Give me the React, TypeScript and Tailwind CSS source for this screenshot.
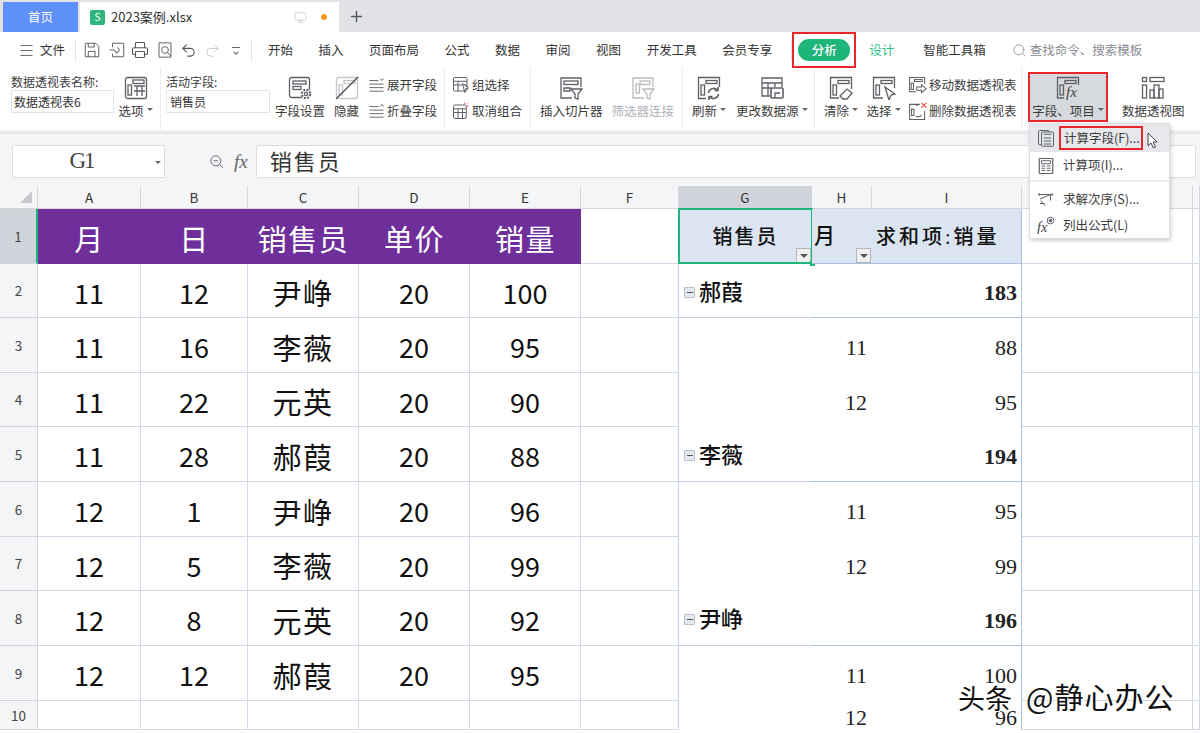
import type { ReactNode } from "react";
import { Menu, Monitor, Plus, Printer, Redo2, Search, Undo2 } from "lucide-react";

const sans = "font-['Noto_Sans_CJK_SC','Noto_Sans',sans-serif]";
const serif = "font-['Liberation_Serif','Noto_Sans_CJK_SC',serif]";

const sales: (string | number)[][] = [
  [11, 12, "尹峥", 20, 100],
  [11, 16, "李薇", 20, 95],
  [11, 22, "元英", 20, 90],
  [11, 28, "郝葭", 20, 88],
  [12, 1, "尹峥", 20, 96],
  [12, 5, "李薇", 20, 99],
  [12, 8, "元英", 20, 92],
  [12, 12, "郝葭", 20, 95],
  ["", "", "", "", ""],
];

// 透视表的行，和左边的数据行一一对应
const pivot = [
  { name: "郝葭", total: "183", line: true },
  { month: "11", total: "88" },
  { month: "12", total: "95" },
  { name: "李薇", total: "194", line: true },
  { month: "11", total: "95" },
  { month: "12", total: "99" },
  { name: "尹峥", total: "196", line: true },
  { month: "11", total: "100" },
  { month: "12", total: "96" },
];

function Ic({ children, size = 24, dim }: { children: ReactNode; size?: number; dim?: boolean }) {
  return (
    <svg
      width={size}
      height={size}
      viewBox="0 0 24 24"
      fill="none"
      stroke={dim ? "#b9bcc1" : "#5c6066"}
      strokeWidth={1.3}
      className="shrink-0"
    >
      {children}
    </svg>
  );
}

const Frame = () => (
  <>
    <rect x="1.5" y="1.5" width="21" height="21" rx="2" />
    <rect x="9" y="4.5" width="11" height="3" />
    <rect x="4" y="9" width="3.5" height="10" />
  </>
);

function Caret() {
  return <span className="ml-[3px] inline-block h-0 w-0 translate-y-[-2px] border-x-[3px] border-t-[3px] border-x-transparent border-t-[#666]" />;
}

function Big({
  icon,
  label,
  caret,
  dim,
  className = "",
}: {
  icon: ReactNode;
  label: string;
  caret?: boolean;
  dim?: boolean;
  className?: string;
}) {
  return (
    <div className={`flex flex-none flex-col items-center pt-[8px] ${className}`}>
      <div className="flex h-[24px] items-center justify-center">{icon}</div>
      <div className={`mt-[3px] flex h-[16px] items-center whitespace-nowrap text-[12.5px] leading-[16px] ${dim ? "text-[#aeb1b6]" : "text-[#3c3c3c]"}`}>
        {label}
        {caret && <Caret />}
      </div>
    </div>
  );
}

function Small({ icon, label }: { icon: ReactNode; label: string }) {
  return (
    <div className="flex h-[26px] items-center gap-[2px] whitespace-nowrap text-[12.5px] text-[#3c3c3c]">
      {icon}
      {label}
    </div>
  );
}

function SmallCol({ children, className = "" }: { children: ReactNode; className?: string }) {
  return <div className={`flex flex-none flex-col pt-[4px] ${className}`}>{children}</div>;
}

function Group({ children, className = "" }: { children: ReactNode; className?: string }) {
  return <div className={`flex h-[62px] flex-none border-r border-[#ececee] ${className}`}>{children}</div>;
}

function TitleBar() {
  return (
    <div className="flex h-[32px] flex-none items-end bg-[#e1e2e6] pl-[3px]">
      <div className="flex h-[30px] w-[75px] items-center justify-center bg-[#5f8ff8] text-[12.5px] text-white">首页</div>
      <div className="ml-[2px] flex h-[30px] w-[259px] items-center bg-white pl-[10px] text-[13px] text-[#333]">
        <span className="flex h-[15px] w-[15px] items-center justify-center rounded-[2px] bg-[#2eb67d] text-[10px] leading-none text-white">S</span>
        <span className="ml-[6px]">2023案例.xlsx</span>
        <Monitor size={13} strokeWidth={1.3} className="ml-[102px] text-[#c3c6cc]" />
        <span className="ml-[14px] h-[6px] w-[6px] rounded-full bg-[#f29a1f]" />
      </div>
      <Plus size={17} strokeWidth={2} className="mb-[7px] ml-[9px] text-[#555a66]" />
    </div>
  );
}

function MenuBar() {
  const tabs = ["开始", "插入", "页面布局", "公式", "数据", "审阅", "视图", "开发工具", "会员专享"];
  return (
    <div className="flex h-[36px] flex-none items-center bg-white text-[12.5px] text-[#333]">
      <Menu size={17} strokeWidth={1.2} className="ml-[18px] text-[#555]" />
      <span className="ml-[5px]">文件</span>
      <span className="ml-[10px] h-[22px] w-px bg-[#e4e5e8]" />
      <div className="ml-[7px] flex w-[168px] flex-none items-center text-[#55595f]">
        <Ic size={18}>
          <path d="M3 3h14l4 4v14H3z" />
          <path d="M7 21v-7h9v7M7 3v5h8V3" />
        </Ic>
        <span className="ml-[7px]">
          <Ic size={18}>
            <path d="M6 3h15v18H6v-4M6 8V3" />
            <path d="M2 12h7a3 3 0 1 0 3-3" />
            <path d="M10 14l2 3" />
          </Ic>
        </span>
        <Printer size={18} strokeWidth={1.5} className="ml-[5px]" />
        <span className="ml-[7px]">
          <Ic size={18}>
            <path d="M4 2.5h16v19H4z" />
            <circle cx="12" cy="12" r="4.5" />
            <path d="M15 15l5 5" />
          </Ic>
        </span>
        <Undo2 size={17} strokeWidth={1.6} className="ml-[6px]" />
        <Redo2 size={17} strokeWidth={1.4} className="ml-[7px] text-[#c6c8cc]" />
        <span className="ml-[11px] flex flex-col items-center gap-[2px]">
          <span className="h-px w-[8px] bg-[#666]" />
          <span className="h-[4px] w-[4px] rotate-45 border-b border-r border-[#666]" />
        </span>
      </div>
      <span className="h-[22px] w-px bg-[#e4e5e8]" />
      <div className="ml-[16px] flex gap-[25.5px] whitespace-nowrap">
        {tabs.map((t) => (
          <span key={t}>{t}</span>
        ))}
      </div>
      <span className="ml-[19px] h-[22px] w-px bg-[#e4e5e8]" />
      <div className="flex h-[36px] w-[64px] flex-none items-center justify-center border-[2.5px] border-[#e8262b]">
        <span className="flex h-[22px] w-[52px] items-center justify-center rounded-full bg-[#1db57a] font-medium text-white">分析</span>
      </div>
      <span className="ml-[13px] text-[#2fbf85]">设计</span>
      <span className="ml-[29px]">智能工具箱</span>
      <Search size={15} strokeWidth={1.3} className="ml-[26px] text-[#8a8d93]" />
      <span className="ml-[3px] text-[#8a8d93]">查找命令、搜索模板</span>
    </div>
  );
}

function Ribbon() {
  return (
    <div className="flex h-[62px] flex-none bg-white">
      <Group className="w-[161px] pl-[11px]">
        <div className="w-[103px] flex-none">
          <div className="mt-[6px] h-[16px] whitespace-nowrap text-[12px] leading-[16px] text-[#3c3c3c]">数据透视表名称:</div>
          <div className="flex h-[23px] items-center border border-[#e3e4e7] pl-[2px] text-[12px] text-[#333]">数据透视表6</div>
        </div>
        <Big
          className="ml-[5px] w-[33px]"
          label="选项"
          caret
          icon={
            <Ic>
              <rect x="1.5" y="1.5" width="21" height="21" rx="2" />
              <rect x="9" y="4" width="11" height="3.5" />
              <rect x="4" y="9" width="3.5" height="10" />
              <path d="M10 10h11M10 15h11M13 10v10M18 10v10" />
            </Ic>
          }
        />
      </Group>
      <Group className="w-[284px] pl-[5px]">
        <div className="w-[104px] flex-none">
          <div className="mt-[6px] h-[16px] text-[12px] leading-[16px] text-[#3c3c3c]">活动字段:</div>
          <div className="flex h-[23px] items-center border border-[#e3e4e7] pl-[3px] text-[12px] text-[#333]">销售员</div>
        </div>
        <Big
          className="ml-[5px] w-[50px]"
          label="字段设置"
          icon={
            <Ic>
              <rect x="1.5" y="1.5" width="20" height="20" rx="2" />
              <rect x="5" y="5" width="13" height="3" />
              <rect x="5" y="10.5" width="8" height="3" />
              <circle cx="18" cy="18" r="5.5" fill="#fff" stroke="none" />
              <circle cx="18" cy="18" r="4.2" strokeWidth={2.2} strokeDasharray="2 1.3" />
              <circle cx="18" cy="18" r="1.6" />
            </Ic>
          }
        />
        <Big
          className="ml-[9px] w-[25px]"
          label="隐藏"
          icon={
            <Ic>
              <g stroke="#c4c6ca">
                <Frame />
              </g>
              <path d="M1 23L23 1" stroke="#4a4d52" />
            </Ic>
          }
        />
        <SmallCol className="ml-[9px]">
          <Small
            label="展开字段"
            icon={
              <Ic size={17}>
                <path d="M2 5h13M2 10h20M2 15h20M2 20h20M17 2l2.5 3L22 2" />
              </Ic>
            }
          />
          <Small
            label="折叠字段"
            icon={
              <Ic size={17}>
                <path d="M2 5h13M2 10h20M2 15h20M2 20h20M17 5l2.5-3L22 5" />
              </Ic>
            }
          />
        </SmallCol>
      </Group>
      <Group className="w-[86px] pl-[7px]">
        <SmallCol>
          <Small
            label="组选择"
            icon={
              <Ic size={18}>
                <rect x="2" y="2" width="18" height="18" rx="1.5" />
                <path d="M2 7h18M2 12h18M8 7v13" />
                <path d="M14 10l8 6-4 1-1 5z" fill="#fff" />
              </Ic>
            }
          />
          <Small
            label="取消组合"
            icon={
              <Ic size={18}>
                <rect x="2" y="4" width="17" height="18" rx="1.5" />
                <path d="M2 9h17M2 14h17M8 9v13M14 9v13" />
                <path d="M16 3l1-2M20 6l2-1M20 2l1-1" stroke="#e8443a" />
              </Ic>
            }
          />
        </SmallCol>
      </Group>
      <Group className="w-[152px] pl-[9px]">
        <Big
          label="插入切片器"
          icon={
            <Ic>
              <path d="M13 22H2V2h20v9" />
              <rect x="5" y="5" width="14" height="3.5" />
              <path d="M5 12h6v3H5z" />
              <path d="M12 13h11l-4 5v5l-3-1v-4z" fill="#fff" />
            </Ic>
          }
        />
        <Big
          dim
          className="ml-[9px]"
          label="筛选器连接"
          icon={
            <Ic dim>
              <path d="M13 22H2V2h20v9" />
              <rect x="9" y="5" width="10" height="3.5" />
              <rect x="5" y="8" width="3.5" height="9" />
              <path d="M12 13h11l-4 5v5l-3-1v-4z" fill="#fff" />
            </Ic>
          }
        />
      </Group>
      <Group className="w-[132px] pl-[10px]">
        <Big
          className="w-[32px]"
          label="刷新"
          caret
          icon={
            <Ic>
              <path d="M9 22.5H1.5v-21h21V11" />
              <rect x="9" y="4.5" width="11" height="3" />
              <rect x="4" y="9" width="3.5" height="10" />
              <path d="M11.5 17a5 5 0 0 1 9-2.5M21.5 18a5 5 0 0 1-9 2.5" strokeWidth={1.6} />
              <path d="M21 11v3.5h-3.5M12 24v-3.5h3.5" strokeWidth={1.6} />
            </Ic>
          }
        />
        <Big
          className="ml-[11px]"
          label="更改数据源"
          caret
          icon={
            <Ic>
              <path d="M10 20H2V2h20v9" />
              <path d="M2 7h20M2 12h9M8 7v13M15 7v4" />
              <rect x="11" y="12" width="12" height="10" rx="1" fill="#fff" strokeWidth={1.6} />
              <path d="M15 22v-5h5" />
            </Ic>
          }
        />
      </Group>
      <Group className="w-[207px] pl-[10px]">
        <Big
          className="w-[32px]"
          label="清除"
          caret
          icon={
            <Ic>
              <path d="M10 22H1.5V1.5h21V13" />
              <rect x="9" y="4.5" width="11" height="3" />
              <rect x="4" y="9" width="3.5" height="10" />
              <path d="M11 20l7-7 5 4-5 6h-4z" fill="#fff" />
            </Ic>
          }
        />
        <Big
          className="ml-[10px] w-[33px]"
          label="选择"
          caret
          icon={
            <Ic>
              <path d="M11 22H1.5V1.5h21V12" />
              <rect x="9" y="4.5" width="11" height="3" />
              <rect x="4" y="9" width="3.5" height="10" />
              <path d="M13 11l10 7-4 1-2 5z" fill="#fff" />
            </Ic>
          }
        />
        <SmallCol className="ml-[8px]">
          <Small
            label="移动数据透视表"
            icon={
              <Ic size={19}>
                <path d="M10 20H2V2h19v8" />
                <rect x="8" y="4.5" width="10" height="2.5" />
                <rect x="4" y="9" width="3" height="8" />
                <path d="M11 14h6v-3l6 5-6 5v-3h-6z" fill="#fff" />
              </Ic>
            }
          />
          <Small
            label="删除数据透视表"
            icon={
              <Ic size={19}>
                <path d="M15 3H2v19h19v-11" />
                <rect x="4.5" y="9" width="3" height="8" />
                <path d="M10 4h3M10 18a5 5 0 0 0 7-2" />
                <path d="M17 1l6 6M23 1l-6 6" stroke="#e8443a" />
              </Ic>
            }
          />
        </SmallCol>
      </Group>
      <div className="flex h-[62px] flex-none pl-[6px]">
        <div className="mt-[4px] h-[50px] w-[80px] flex-none border-[2.5px] border-[#e8262b] bg-[#d6d9dd]">
          <Big
            className="!pt-[2px]"
            label="字段、项目"
            caret
            icon={
              <Ic>
                <path d="M8 22H1.5V1.5h21V9" />
                <rect x="9" y="4.5" width="11" height="3" />
                <rect x="4" y="9" width="3.5" height="10" />
                <text x="10" y="21" fontSize="15" fontStyle="italic" fontFamily="Liberation Serif" fill="#444" stroke="none">fx</text>
              </Ic>
            }
          />
        </div>
        <Big
          className="ml-[14px]"
          label="数据透视图"
          icon={
            <Ic>
              <rect x="9" y="1.5" width="14" height="4" />
              <rect x="1.5" y="1.5" width="4" height="4" />
              <rect x="1.5" y="9" width="4" height="13" />
              <rect x="9" y="14" width="4" height="8" />
              <rect x="13" y="9" width="5" height="13" />
              <rect x="18" y="13" width="4" height="9" />
            </Ic>
          }
        />
      </div>
    </div>
  );
}

function FormulaBar() {
  return (
    <div className="flex h-[54px] flex-none items-start border-t border-[#e5e6e9] bg-[#f4f5f7] pl-[12px] pt-[12px] shadow-[inset_0_1px_1px_#e6e7ea]">
      <div className={`relative flex h-[33px] w-[153px] flex-none items-center justify-center rounded-[2px] border border-[#dcdde1] bg-white pr-[14px] text-[23px] tracking-[-2px] text-[#444] ${serif}`}>
        G1
        <span className="absolute right-[3px] top-[15px] h-0 w-0 border-x-[3px] border-t-[3px] border-x-transparent border-t-[#666]" />
      </div>
      <span className="ml-[43px] mt-[8px]">
        <Ic size={17}>
          <circle cx="11" cy="11" r="7" />
          <path d="M16 16l5 5M8 11h6" />
        </Ic>
      </span>
      <span className={`ml-[9px] text-[19px] italic leading-[33px] text-[#666] ${serif}`}>fx</span>
      <div className="ml-[8px] flex h-[33px] w-[940px] flex-none items-center rounded-[2px] border border-[#dcdde1] bg-white pb-[2px] pl-[13px] text-[22px] tracking-[2px] text-[#333]">
        销售员
      </div>
    </div>
  );
}

function FilterBtn() {
  return (
    <span className="absolute bottom-0 right-[1px] flex h-[15px] w-[15px] items-center justify-center border border-[#b4b6ba] bg-[#f0f0f0]">
      <span className="h-0 w-0 border-x-[4px] border-t-[4px] border-x-transparent border-t-[#555]" />
    </span>
  );
}

const line = "border-b border-r border-[#d3d9e8]";
const head = "flex items-center justify-center border-b border-r border-[#d4d6dc] bg-[#f4f5f7] text-[13.5px] text-[#333]";

function Sheet() {
  const letters = ["A", "B", "C", "D", "E", "F"];
  const rowHead = "flex items-center justify-center border-b border-r border-[#cfd3dc] bg-[#f4f5f7] text-[13.5px] text-[#444]";
  return (
    <div className={`grid min-h-0 flex-1 grid-cols-[38px_103px_107px_111px_111px_111px_98px_133px_60px_150px_171px_7px] grid-rows-[23px_55px_54px_55px_54px_55px_55px_54px_55px_55px_29px_3px] overflow-hidden bg-white ${sans}`}>
      {/* 列头 */}
      <div className={`${head} justify-end pr-[5px]`}>
        <svg width="12" height="12" viewBox="0 0 12 12">
          <path d="M12 0v12H0z" fill="#c6c8cc" />
        </svg>
      </div>
      {letters.map((l) => (
        <div key={l} className={head}>{l}</div>
      ))}
      <div className={`${head} !bg-[#d0d3d9] text-[#1db57a]`}>G</div>
      <div className={head}>H</div>
      <div className={head}>I</div>
      <div className={head} />
      <div className={head} />

      {/* 第 1 行 */}
      <div className={`${rowHead} border-r-2 !border-r-[#1db57a] !bg-[#d0d3d9] text-[#1db57a]`}>1</div>
      {["月", "日", "销售员", "单价", "销量"].map((t) => (
        <div key={t} className="flex items-center justify-center border-b border-[#6f2f9b] bg-[#6f2f9b] pt-[5px] text-[29px] tracking-[1.5px] text-white">
          {t}
        </div>
      ))}
      <div className={line} />
      <div className={`relative flex items-center justify-center border-b border-[#a9c0de] bg-[#dbe5f1] pt-[2px] text-[20px] font-medium tracking-[2px] text-[#111] ${serif}`}>
        销售员
        <FilterBtn />
        <span className="pointer-events-none absolute inset-y-[-1px] left-[-1px] right-[-1px] border-2 border-[#1db57a]" />
        <span className="absolute bottom-[-3px] right-[-3px] h-[5px] w-[5px] bg-[#1db57a]" />
      </div>
      <div className={`relative flex items-center border-b border-[#a9c0de] bg-[#dbe5f1] pl-[2px] pt-[2px] text-[21px] font-medium text-[#111] ${serif}`}>
        月
        <FilterBtn />
      </div>
      <div className={`flex items-center whitespace-nowrap border-b border-r border-[#a9c0de] bg-[#dbe5f1] pl-[4px] pt-[2px] text-[20px] font-medium tracking-[3px] text-[#111] ${serif}`}>
        求和项:销量
      </div>
      <div className={line} />
      <div className={line} />

      {/* 数据行 */}
      {sales.map((r, i) => {
        const p = pivot[i];
        const bold = Boolean(p.name);
        const pivotBorder = p.line ? "border-b border-[#a9c0de]" : "";
        return (
          <div key={i} className="contents">
            <div className={rowHead}>{i + 2}</div>
            {r.map((v, j) => (
              <div
                key={j}
                className={`flex items-center justify-center pt-[5px] text-[#111] ${line} ${j === 2 ? "text-[29px] tracking-[1.5px]" : "text-[27px]"}`}
              >
                {v}
              </div>
            ))}
            <div className={line} />
            <div className={`flex items-center border-l border-[#c4d0e4] pl-[5px] pt-[3px] -ml-px text-[22px] font-medium text-[#111] ${pivotBorder} ${serif}`}>
              {p.name && (
                <>
                  <span className="mr-[4px] flex h-[11px] w-[11px] items-center justify-center rounded-[1px] border border-[#b7c0cf] bg-[#e4e8ef]">
                    <span className="h-px w-[6px] bg-[#555]" />
                  </span>
                  {p.name}
                </>
              )}
            </div>
            <div className={`flex items-center justify-end pr-[5px] pt-[4px] text-[22px] text-[#222] ${pivotBorder} ${serif}`}>{p.month}</div>
            <div className={`flex items-center justify-end border-r border-[#a9c0de] pr-[4px] pt-[4px] text-[22px] text-[#222] ${bold ? "font-bold" : ""} ${pivotBorder} ${serif}`}>
              {p.total}
            </div>
            <div className={line} />
            <div className={line} />
          </div>
        );
      })}
    </div>
  );
}

function FieldMenu() {
  const rowCls = "flex items-center pl-[7px] text-[12.5px] text-[#3c3c3c]";
  return (
    <div className="absolute left-[1029px] top-[123px] z-10 w-[141px] border border-[#dcdde0] bg-white shadow-[1px_2px_4px_rgba(0,0,0,0.18)]">
      <div className={`${rowCls} h-[28px] bg-[#e6e8ec]`}>
        <Ic size={18}>
          <rect x="2" y="2" width="14" height="19" rx="1" />
          <rect x="6" y="4" width="16" height="19" rx="1" fill="#e6e8ec" />
          <path d="M9 7h10M9 12h10M9 16h10M9 20h10" strokeWidth={1.6} />
        </Ic>
        <span className="ml-[4px] flex h-[24px] w-[84px] flex-none items-center whitespace-nowrap border-[2px] border-[#e8262b] pl-[3px]">计算字段(F)...</span>
        <svg width="11" height="17" viewBox="0 0 11 17" className="ml-[4px] translate-y-[2px]">
          <path d="M1 1v13l3-3 2.5 5 2-1-2.5-5H10z" fill="#fff" stroke="#444" />
        </svg>
      </div>
      <div className={`${rowCls} h-[27px]`}>
        <Ic size={18}>
          <rect x="3" y="2" width="18" height="20" rx="1" strokeWidth={1.6} />
          <path d="M6 5h12v4H6zM6 12h5M13 12h5M6 15h5M13 15h5M6 18h5M13 18h5" />
        </Ic>
        <span className="ml-[8px]">计算项(I)...</span>
      </div>
      <div className="mt-[1px] h-[2px] bg-[#eeeff1]" />
      <div className={`${rowCls} mt-[4px] h-[26px]`}>
        <Ic size={18}>
          <path d="M4 6h14M4 12l14-6M18 6v8M5 14l6 7M4 18h6" />
          <circle cx="3" cy="6" r="1" fill="#5c6066" />
          <circle cx="20" cy="6" r="1" fill="#5c6066" />
        </Ic>
        <span className="ml-[8px]">求解次序(S)...</span>
      </div>
      <div className={`${rowCls} h-[26px]`}>
        <Ic size={18}>
          <text x="0" y="21" fontSize="19" fontStyle="italic" fontFamily="Liberation Serif" fill="#444" stroke="none">fx</text>
          <circle cx="18" cy="6" r="4.5" />
          <circle cx="18" cy="6" r="1.8" fill="#5c6066" />
        </Ic>
        <span className="ml-[8px]">列出公式(L)</span>
      </div>
    </div>
  );
}

export default function App() {
  return (
    <div className={`relative flex h-[733px] w-[1200px] flex-col overflow-hidden bg-white ${sans}`}>
      <TitleBar />
      <MenuBar />
      <Ribbon />
      <div className="h-[2px] flex-none bg-[#f0f1f3]" />
      <FormulaBar />
      <Sheet />
      <FieldMenu />
      <div className="pointer-events-none absolute left-[958px] top-[675px] whitespace-nowrap text-[29px] text-[#111] [text-shadow:1px_1px_0_#fff]">
        <span className="text-[27px]">头条</span>
        <span className="ml-[14px] tracking-[1px]">@静心办公</span>
      </div>
    </div>
  );
}
